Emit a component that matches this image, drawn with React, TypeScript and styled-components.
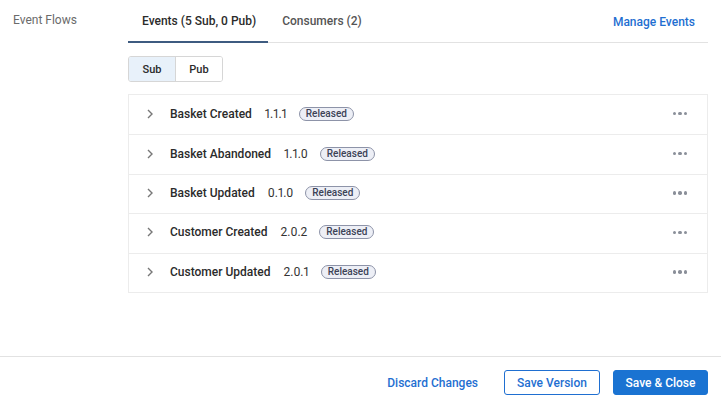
import React from "react";
import styled, { createGlobalStyle } from "styled-components";

const Global = createGlobalStyle`
  html, body { margin: 0; padding: 0; background: #fff; }
  body { font-family: Roboto, "Noto Sans", "Liberation Sans", sans-serif; color: #2b2b2b; }
  * { box-sizing: border-box; }
`;

const Page = styled.div`
  width: 721px;
  height: 408px;
  display: flex;
  flex-direction: column;
`;

const Body = styled.div`
  flex: 1;
  display: grid;
  grid-template-columns: 128px 1fr;
  padding-right: 13px;
`;

const SideLabel = styled.div`
  padding: 13px 0 0 13px;
  font-size: 12px;
  color: #6b6b6b;
`;

const Main = styled.div`
  display: flex;
  flex-direction: column;
`;

const TabBar = styled.div`
  display: flex;
  align-items: stretch;
  height: 43px;
  border-bottom: 1px solid #e2e2e2;
`;

const Tab = styled.div<{ $active?: boolean }>`
  padding: 1px 12px 0 14px;
  display: flex;
  align-items: center;
  font-size: 12px;
  font-weight: 500;
  color: ${(p) => (p.$active ? "#2b2b2b" : "#555")};
  border-bottom: 2px solid ${(p) => (p.$active ? "#3e5b80" : "transparent")};
  margin-bottom: -1px;
`;

const Spacer = styled.div`
  flex: 1;
`;

const LinkButton = styled.button`
  background: none;
  border: none;
  font-family: inherit;
  font-size: 12px;
  font-weight: 500;
  color: #1f6fd1;
  padding: 1px 13px 0;
  cursor: pointer;
  white-space: nowrap;
`;

const Toggle = styled.div`
  display: inline-flex;
  margin-top: 13px;
  align-self: flex-start;
  border: 1px solid #d6d6d6;
  border-radius: 3px;
  overflow: hidden;
  height: 26px;
`;

const ToggleItem = styled.div<{ $active?: boolean }>`
  width: ${(p) => (p.$active ? "46px" : "47px")};
  display: flex;
  align-items: center;
  justify-content: center;
  font-size: 11px;
  font-weight: 500;
  color: #2b2b2b;
  background: ${(p) => (p.$active ? "#e8f1fa" : "#fff")};
  & + & { border-left: 1px solid #d6d6d6; }
`;

const List = styled.div`
  margin-top: 12px;
  border: 1px solid #ececec;
`;

const Row = styled.div`
  height: 39.4px;
  display: flex;
  align-items: center;
  padding: 0 20px 2px 17px;
  & + & { border-top: 1px solid #ececec; }
`;

const Chevron = styled.svg`
  width: 8px;
  height: 10px;
  margin-right: 16px;
  flex: none;
`;

const Name = styled.span`
  font-size: 12px;
  font-weight: 500;
  color: #2b2b2b;
  margin-right: 13px;
`;

const Version = styled.span`
  font-size: 12px;
  color: #333;
  margin-right: 12px;
  font-variant-numeric: proportional-nums;
`;

const Badge = styled.span`
  font-size: 10px;
  font-weight: 500;
  color: #3c4356;
  background: #edeff6;
  border: 1px solid #8d93a8;
  border-radius: 8px;
  padding: 0 6px;
  height: 14px;
  line-height: 12px;
  display: inline-flex;
  align-items: center;
`;

const Dots = styled.div`
  margin-left: auto;
  display: flex;
  gap: 2px;
  & > span {
    width: 3.5px;
    height: 3.5px;
    border-radius: 50%;
    background: #8a8f99;
  }
`;

const Footer = styled.div`
  height: 52px;
  border-top: 1px solid #e2e2e2;
  display: flex;
  align-items: center;
  justify-content: flex-end;
  padding-right: 13px;
  gap: 13px;
`;

const OutlineButton = styled.button`
  height: 25px;
  width: 96px;
  padding: 0;
  border: 1px solid #1f6fd1;
  border-radius: 3px;
  background: #fff;
  color: #1f6fd1;
  font-family: inherit;
  font-size: 12px;
  font-weight: 500;
  white-space: nowrap;
`;

const PrimaryButton = styled.button`
  height: 25px;
  width: 95px;
  padding: 0;
  border: 1px solid #1a73d2;
  border-radius: 3px;
  background: #1a73d2;
  color: #fff;
  font-family: inherit;
  font-size: 12px;
  font-weight: 500;
  white-space: nowrap;
`;

const events = [
  { name: "Basket Created", version: "1.1.1" },
  { name: "Basket Abandoned", version: "1.1.0" },
  { name: "Basket Updated", version: "0.1.0" },
  { name: "Customer Created", version: "2.0.2" },
  { name: "Customer Updated", version: "2.0.1" },
];

export default function App() {
  return (
    <Page>
      <Global />
      <Body>
        <SideLabel>Event Flows</SideLabel>
        <Main>
          <TabBar>
            <Tab $active>Events (5 Sub, 0 Pub)</Tab>
            <Tab>Consumers (2)</Tab>
            <Spacer />
            <LinkButton>Manage Events</LinkButton>
          </TabBar>
          <Toggle>
            <ToggleItem $active>Sub</ToggleItem>
            <ToggleItem>Pub</ToggleItem>
          </Toggle>
          <List>
            {events.map((e) => (
              <Row key={e.name}>
                <Chevron viewBox="0 0 8 10">
                  <path d="M2 1 L6 5 L2 9" fill="none" stroke="#777" strokeWidth="1.4" />
                </Chevron>
                <Name>{e.name}</Name>
                <Version>{e.version}</Version>
                <Badge>Released</Badge>
                <Dots>
                  <span />
                  <span />
                  <span />
                </Dots>
              </Row>
            ))}
          </List>
        </Main>
      </Body>
      <Footer>
        <LinkButton>Discard Changes</LinkButton>
        <OutlineButton>Save Version</OutlineButton>
        <PrimaryButton>Save &amp; Close</PrimaryButton>
      </Footer>
    </Page>
  );
}
